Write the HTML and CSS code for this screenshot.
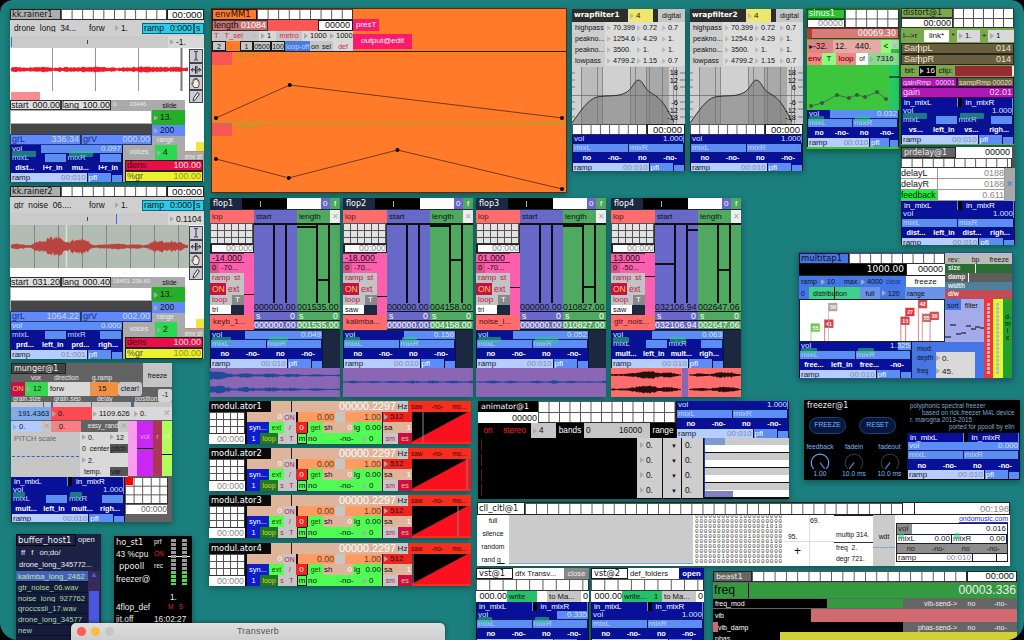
FILE: index.html
```html
<!DOCTYPE html>
<html lang="en">
<head>
<meta charset="utf-8">
<title>ppooll</title>
<link rel="stylesheet" href="styles.css">
</head>
<body>
<main class="desktop">

<section class="win rainer rainer-a" data-rainer="0"></section>
<section class="win rainer rainer-b" data-rainer="1"></section>

<section class="win munger">
  <div class="head">
    <div class="lead">
      <div class="row u1"><b class="v title">munger@1</b></div>
      <div class="row u2 cap"><i></i><b>vox</b><b>direction</b><b>g.ramp</b></div>
    </div>
    <b class="freeze">freeze</b>
  </div>
  <div class="row u3"><b class="crimson gold c">ON</b><b class="green num">12</b><b class="grey">forw</b><b class="orange num">15</b><b class="silver round c">clear!</b></div>
  <div class="row u4 cap"><b>grain.size</b><b>grain.sep</b><b>delay</b><b>position</b></div>
  <div class="row u5"><i class="silver m1"></i><i class="silver m2"></i><i class="silver m3"></i><i class="silver m2"></i></div>
  <div class="row u6"><b class="soft num">191.4363</b><b class="hot num">0.</b><b class="grey num">1109.626</b><b class="grey num">0.</b><b class="grey x">✕</b></div>
  <div class="mid">
    <div>
      <div class="row u7"><b class="pale num">0.</b><b class="silver x">✕</b><b class="rose num">0.</b><b class="snow r">easy_rand</b><b class="silver x">✕</b></div>
      <div class="row u8">
        <div class="pitch silver"><span>PITCH scale</span><i></i></div>
        <div class="quad grey"><span class="num">0.</span><span class="num">12</span><span>0 &nbsp;center</span><span class="dark">pitch</span><span class="num">2.</span><span></span><span class="temp">temp.</span><span class="dark">var</span></div>
      </div>
    </div>
    <div class="row sliders"><i class="s1"></i><b class="s2 c">vol</b><b class="s3 c">r</b><b class="s4 c">st</b></div>
  </div>
  <div class="foot"><div data-mix="7"></div><div class="side"><div class="cells seq"><i></i></div><b class="time white r">00:000</b></div></div>
  <b class="neg">-1</b>
</section>

<section class="win buffer">
  <div class="row b1"><b class="v title">buffer_host1</b><b>open</b></div>
  <div class="row b2"><b>ff &nbsp; f &nbsp; on;do/</b></div>
  <div class="row b2 long"><b>drone_long_345772...</b></div>
  <div class="files"><ul><li class="sel">kalimba_long_2462</li><li>gtr_noise_06.wav</li><li>noise_long_927762</li><li>qroccssii_17.wav</li><li>drone_long_34577</li><li>new</li></ul><div class="scroll"><span>▲</span><i></i></div></div>
</section>

<section class="win host">
  <div class="info">
    <div class="row"><b class="v">ho_st1</b><b class="s6">prf</b></div>
    <div class="row"><b>43 %cpu</b><b class="s6 redtext">ON</b></div>
    <div class="row"><b class="v in">ppooll</b><b class="s6">rec</b></div>
    <div class="row"><b>freezer@</b></div>
    <div class="row tall"><b></b><b>1.</b></div>
    <div class="row"><b>4flop_def</b><b class="s6 redtext">M &nbsp; S</b></div>
    <div class="row wide"><b>jit.off</b><b>16:02:27</b></div>
  </div>
  <div class="meters"><i></i><i></i></div>
</section>

<section class="macbar"><i class="close"></i><i class="mini"></i><i class="zoom"></i><span>Transverb</span></section>

<section class="win env">
  <div class="tools">
    <div>
      <div class="row e1"><b class="v bord">envMM1</b><i class="cells"></i></div>
      <div class="row e2"><b class="len sb"><span>length</span><span class="w9">01084</span></b><i class="coral"></i><b class="white bord r">00000</b></div>
      <div class="row e3"><b class="silver rt">T &nbsp; T_sel</b><b class="silver ring">○</b><b class="grey num">1</b><b class="silver rt c">metro</b><b class="grey num">1000</b><b class="grey num">1000</b></div>
      <div class="row e4"><b class="silver bord c">2</b><i></i><b class="silver bord c">1</b><b class="silver bord c">0500</b><b class="silver bord c">100</b><b class="loop c">loop-off</b><b class="silver c">on</b><b class="silver c">sel</b><b class="grey rt c">def</b></div>
    </div>
    <div class="magenta"><b>presT</b><b>output@edit</b></div>
  </div>
  <div class="curve"><i></i><span>□no□-no-</span><svg viewBox="0 0 355 70"><path d="M4 66 78 33 351 66"/><circle cx="4" cy="66" r="2"/><circle cx="78" cy="33" r="2"/><circle cx="351" cy="66" r="2"/></svg></div>
  <div class="curve second"><i></i><span>□no□-no-</span><svg viewBox="0 0 355 70"><path d="M4 36 77 55 186 27 351 66"/><circle cx="4" cy="36" r="2"/><circle cx="77" cy="55" r="2"/><circle cx="186" cy="27" r="2"/><circle cx="351" cy="66" r="2"/></svg></div>
</section>

<section class="win wrap wrap-a" data-wrap="1"></section>
<section class="win wrap wrap-b" data-wrap="2"></section>

<section class="win sinus">
  <div class="sinushead"><div><b class="v title">sinus1</b><b class="white r dim">00000</b></div><i class="cells"></i></div>
  <div class="row n1"><b class="v r">00069.30</b></div>
  <div class="row n2"><b class="dusty">▸-32.</b><b class="rosy">12.</b><b class="rosy">440.</b><b class="mint c">&lt;</b><b class="bar">✕</b></div>
  <div class="row n3"><b class="salmon c">env</b><b class="mint c">T</b><b class="salmon c">loop</b><b class="white c s6">of</b><b class="sage num">7316</b></div>
  <div class="graph"><svg viewBox="0 0 92 45"><path class="lane" d="M82 0h11v46H82z"/><path class="mark" d="M82 12h11"/><path class="line" d="M4 41 15 38 30 30 42 33 50 30 58 32 70 27 79 34"/><g><circle cx="4" cy="41" r="2"/><circle cx="15" cy="38" r="2"/><circle cx="30" cy="30" r="2"/><circle cx="42" cy="33" r="2"/><circle cx="50" cy="30" r="2"/><circle cx="58" cy="32" r="2"/><circle cx="70" cy="27" r="2"/><circle cx="79" cy="34" r="2"/></g></svg></div>
  <div data-mix="8"></div>
</section>

<section class="win distort">
  <div class="sinushead"><div><b class="v title">distort@1</b><b class="white r">00:000</b></div><i class="cells"></i></div>
  <div class="row d1"><b class="moss">l--&gt;r</b><b class="white c">link*</b><b class="moss c">*</b><b class="grey num">1.</b><b class="moss c">+</b><b class="grey num">1</b></div>
  <div class="row d2"><b class="olive sb tick"><span>SampL</span><span>014</span></b></div>
  <div class="row d2"><b class="olive sb tick"><span>SampR</span><span>014</span></b></div>
  <div class="row d3"><b class="moss c">bit:</b><b class="black num">16</b><b class="moss c">clip:</b><i class="brick"></i></div>
  <div class="row d4"><b class="violet sb"><span>gainRmp</span><span>00001</span></b><b class="olive sb"><span>sampRmp</span><span>00020</span></b></div>
  <div class="row d5"><b class="violet sb"><span>gain</span><span>02.01</span></b></div>
  <div data-mix="9"></div>
</section>

<section class="win prdelay">
  <div class="row p1"><b class="v title">prdelay@1</b><b class="white r">00000</b></div>
  <div class="cells strip"></div>
  <div class="delays"><div>
    <div class="row p2"><b>delayL</b><b class="r">0188</b></div>
    <div class="row p2"><b>delayR</b><b class="r">0188</b></div>
    <div class="row p2 fb"><b>feedback</b><b class="r">0.611</b></div>
  </div><b class="x">✕</b></div>
  <div data-mix="10"></div>
</section>

<section class="win flop flop-a" data-flop="0"></section>
<section class="win flop flop-b" data-flop="1"></section>
<section class="win flop flop-c" data-flop="2"></section>
<section class="win flop flop-d" data-flop="3"></section>

<section class="win multi">
  <div class="row mt">
    <div>
      <div class="row t1"><b class="v bord">multitap1</b><i class="cells"></i></div>
      <div class="row t2"><b class="black v r">1000.00</b><b class="white r">00000</b></div>
      <div class="row t3"><b>ramp</b><b class="num">10</b><b>max</b><b class="num">4000</b><b class="faint">clear</b><b class="white c">freeze</b></div>
      <div class="row t4"><b>0</b><b class="dist">distribution</b><b class="full c">full</b><b class="num">120</b><b class="full">range</b></div>
    </div>
    <div class="rev"><b class="silver">rev: <span>bp</span><span>freeze</span></b><b class="size">size</b><b class="damp">damp</b><b class="width">width</b><b class="dw">d/w</b></div>
  </div>
  <div class="row mb">
    <div>
      <div class="row t5"><div class="flags"><svg viewBox="0 0 145 42" id="flags"></svg></div><div class="sorter"><b>sort</b><span>filter</span><svg viewBox="0 0 39 32"><path d="M0 27h6M5 15h6M11 24h5M16 23h5M21 16h5M26 19h5M30 17h5M35 18h4"/></svg></div></div>
      <div class="row t6"><div data-mix="11"></div><div class="mod"><span>mod:</span><div class="row"><div class="names"><span>depth</span><span>freq</span></div><div class="grey vals"><span class="num">0.</span><span class="num">45.</span></div></div></div></div>
    </div>
    <i class="lamp redlamp"></i><i class="lamp yellowlamp"></i><b class="dmix">d-<br>m<br>i<br>x</b>
  </div>
</section>

<section class="win freezer">
  <div class="left">
    <b class="v">freezer@1</b>
    <div class="pills"><span>FREEZE</span><span>RESET</span></div>
    <div class="dials">
      <div><span>feedback</span><svg viewBox="0 0 20 18"><path class="on" d="M4 16A8.3 8.3 0 1 1 16 16"/><path class="hand" d="M10 10 14.500 16"/></svg><span>1.00</span></div>
      <div><span>fadein</span><svg viewBox="0 0 20 18"><path d="M4 16A8.300 8.300 0 1 1 16 16"/><path class="hand" d="M10 10 5.500 16"/></svg><span>10.0 ms</span></div>
      <div><span>fadeout</span><svg viewBox="0 0 20 18"><path d="M4 16A8.300 8.300 0 1 1 16 16"/><path class="hand" d="M10 10 5.500 16"/></svg><span>10.0 ms</span></div>
    </div>
  </div>
  <div class="right"><p>polyphonic spectral freezer</p><p class="i1">based on rick.freezer M4L device</p><p>r. marogna 2013-2015</p><p class="i2">ported for ppooll by elin</p><div data-mix="12"></div></div>
</section>

<section class="win modu modu-a" data-modu="1"></section>
<section class="win modu modu-b" data-modu="2"></section>
<section class="win modu modu-c" data-modu="3"></section>
<section class="win modu modu-d" data-modu="4"></section>

<section class="win anim">
  <div class="top">
    <div>
      <div class="row a1"><div><b class="v">animator@1</b><b class="white r">00000</b></div><i class="cells"></i></div>
      <div class="row a2"><b class="redtext c">on</b><b class="redtext c">stereo</b><b class="silver num">4</b><b class="c">bands</b><b class="silver">0</b><b class="silver">16000</b><b class="c">range</b></div>
    </div>
    <div data-mix="13"></div>
  </div>
  <div class="row a3"><div class="ticks"><i></i><i></i><i></i><i></i></div><div class="col"><b class="num">0.</b><b class="num">0.</b><b class="num">0.</b><b class="num">0.</b></div><div class="col mid"><b>▼</b><b>▼</b><b>▼</b><b>▼</b></div><div class="col"><b>0.</b><b>0.</b><b>0.</b><b>0.</b></div><div class="bars"><i></i><i></i><i></i><i></i></div></div>
</section>

<section class="win cll">
  <div class="row c1"><b class="v">cll_cltl@1</b><i class="cells"></i><b></b><b class="r dim">00:198</b></div>
  <div class="row c2">
    <div class="modes"><span>full</span><span>silence</span><span>random</span><span>rand <u>g_</u></span></div>
    <div class="field"></div>
    <pre>00000000001000000000
00000000000000000000
00000000000000001010
00000000000000000000
00000000000010000000
00000000000000000100
00000000000000000000
00000000000000000000
00000010000000000000
00000000000010000000</pre>
    <div class="cross"><span>69.</span><span>95.</span><span class="plus">+</span></div>
    <div class="nums"><span>multip 314.</span><span>freq &nbsp;2.</span><span>degr 721.</span></div>
    <b class="wdt c">wdt</b>
    <div class="out"><a>ondomusic.com</a><div data-mix="14" class="plain"></div></div>
  </div>
</section>

<section class="win vst vst-a">
  <div class="row v1"><b class="v white bord">vst@1</b><b class="white">dfx Transv...</b><b class="close c">close</b></div>
  <div class="cells strip"></div>
  <div class="row v2"><b class="white r">000.00</b><b class="write">write</b><b class="white"></b><b class="silver">to Ma...</b><b class="white r">0</b></div>
  <div data-mix="15"></div>
</section>
<section class="win vst vst-b">
  <div class="row v1"><b class="v white bord">vst@2</b><b class="white">def_folders</b><b class="navy c">open</b></div>
  <div class="cells strip"></div>
  <div class="row v2"><b class="white r">000.00</b><b class="write">write...</b><b class="write">1</b><b class="silver">to Ma...</b><b class="white r">0</b></div>
  <div data-mix="16"></div>
</section>

<section class="win beast">
  <div class="row g1"><b class="v">beast1</b><i class="cells"></i><b class="white r">00:000</b></div>
  <div class="row g2"><b>freq</b><b class="sb"><span></span><span>00003.336</span></b></div>
  <div class="row g3"><b class="black">freq_mod</b><i class="leaf"></i><b class="r">vib-send-&gt;</b><b class="c">no</b><b class="c">-no-</b></div>
  <div class="row g4"><b class="black">vib</b><i></i></div>
  <div class="row g5"><i></i><b class="black">vib_damp</b><b class="r">phas-send-&gt;</b><b class="c">no</b><b class="c">-no-</b></div>
  <div class="row g6"><b class="black">phas</b><i></i></div>
</section>

</main>
<script src="script.js"></script>
</body>
</html>
```

FILE: styles.css
```css
*{box-sizing:border-box}
body{margin:0;background:#000;font:7px/1 "Liberation Sans",Arial,sans-serif;color:#111}
b,i{font-weight:400;font-style:normal}
p{margin:0}
svg{display:block;width:100%;height:100%}
.desktop{position:relative;width:1024px;height:640px;overflow:hidden;border-radius:13px 13px 18px 18px;background:#1b7f7d}
.win{position:absolute;overflow:hidden;box-shadow:0 2px 6px rgba(0,0,0,.35)}
.row{display:grid}
.row>*{min-width:0}
.row>b,.row>i,.row>span{display:flex;align-items:center;overflow:hidden;white-space:nowrap;padding:0 2px}
.v{font-family:"DejaVu Sans",Verdana,sans-serif}
.row>.r,.r{justify-content:flex-end;text-align:right}
.row>.c,.c{justify-content:center;text-align:center;padding:0}
.row>.sb{justify-content:space-between}
.s6{font-size:6.500px}
.bord{border:1px solid #1a1a1a}
.num::before{content:"";flex:none;display:inline-block;border:3px solid transparent;border-left:4px solid #aaa;border-right:0;margin-right:2px}
.cells{background:linear-gradient(90deg,#555 1px,transparent 1px) 0 0/var(--cx,10.600px) 100%,linear-gradient(#555 1px,transparent 1px) 0 0/100% var(--cy,100%),#fff;border:1px solid #333;border-width:0 1px 1px 0}

.black{background:#000;color:#fff}.white{background:#fff}.grey{background:#d9d9d9}.silver{background:#c6c6c6}
.navy{background:#08109a;color:#fff}.pale{background:#b0ccff}.soft{background:#7cabec}
.green{background:#35d850}.orange{background:#f1903f}.crimson{background:#c80f4a}.hot{background:#fb4b50}.rose{background:#fb7e80}
.coral{background:#fb5656}.moss{background:#79a84d}.olive{background:#695e40;color:#e8e0d0}.violet{background:#ae18b4;color:#f5d8f7}.brick{background:#962b30}
.mint{background:#90fb7c}.salmon{background:#fd8383}.rosy{background:#e3aaa6}.dusty{background:#dc8583}.sage{background:#8ad990}
.row>.gold{color:#ffcf3f}.redtext{color:#f0201c}.rt{color:#e02540}.dim{color:#888}.faint{color:#1b3986}
.x{color:#aaa;font-size:9px}

/* output mixer */
.mix{background:#101830;color:#d7e3ff;font-size:8px;position:relative;border:1px solid #0c1234;border-top:0;border-bottom:0}
.mix .in{grid:9px/1fr 1fr;background:#08109a;color:#fff}
.mix .in b{border-right:1px solid #5b8df5}
.mix .in b:last-child{padding-left:4px;border-left:4px solid #000}
.mix .vol{height:9px;display:flex;justify-content:space-between;align-items:center;padding:0 1px;border-bottom:1px solid #0c1a60}
.mix .lr{grid:8px/1fr 1fr;border-bottom:1px solid #0c1a60}
.mix .lr b{border-right:1px solid #0c1a60;background:#5b8df5;padding:0 1px;color:#c3d3ff}
.mix .lr b.set{background:linear-gradient(90deg,#08109a 61%,#5b8df5 61%);color:#c9d5ff}
.mix .to{grid:10px/1fr 1fr 1fr 1fr;background:#08109a;color:#fff;font-size:7.300px;font-weight:700}
.mix .to b{font-weight:700;justify-content:center;padding:0}
.mix .ramp{grid:9px/69% 22% 9%;color:#222}
.mix .ramp>b{padding:0 1px;background:#5b8df5;border-right:1px solid #0c1234}
.mix .ramp>b:first-child{background:#b5cdff}
.mix .ramp>b span:last-child{color:#7f8aa0}
.mix .ramp>b:nth-child(2){color:#fff}
.mix .ramp>b:last-child{border-top:2px solid #08109a;border-right:0}
.mix .meter{position:absolute;height:6px;background:rgba(46,205,125,.55);border-radius:1px}
.mix .ml{left:1px}.mix .mr{left:52%}
.plain .mix{background:#fff;color:#222;border:1px solid #222}
.plain .mix .vol{height:11px;background:linear-gradient(90deg,#8d8d8d 14%,#fff 14%)}
.plain .mix .lr b{background:#fff;color:#222;justify-content:space-between}
.plain .mix .to{background:#8d8d8d;color:#222;grid-template-rows:9px}.plain .mix .to b{font-weight:400}
.plain .mix .ramp{grid-template-rows:8px}
.plain .mix .ramp>b,.plain .mix .ramp>b:first-child{background:#fff;color:#222;border-top:1px solid #222}

/* rainer */
.rainer{left:10px;width:194px;height:173px;background:#aaa}
.rainer-a{top:9px}.rainer-b{top:186px}
.rainer .q1{grid:11px/51px 106px 37px;font-size:9.800px}
.rainer .q1 .v{background:#aeaeae;font-size:8px;padding:0 1px;border:1px solid #222}
.rainer .q1 .white{border:1px solid #222;padding:0 1px}
.rainer .q2{grid:16px/77px 26px 29px 52px 10px;background:#cfcfcf;font-size:8.300px;align-items:center}
.rainer .q2 b:first-child{padding-left:4px;padding-right:0}
.rainer .q2 .cy{background:#27cdea;height:11px;border:1px solid #1a6070;font-size:8.800px;padding:0 1px}
.rainer .q3{grid:12px/1fr 36px;background:#cacaca;font-size:8.500px}
.rainer .q3 i{background:linear-gradient(#444,#444) 77px 4px/1px 4px no-repeat,linear-gradient(#3d6de0,#3d6de0) var(--m) 1px/1px 10px no-repeat}
.rainer .q3 b{background:#d8d8d8}
.rainer .wave{height:52px;background:#fff}
.rainer .low{display:grid;grid-template-columns:142px 33px 19px}
.rainer .q4{grid:10px/51px 50px 41px;font-size:9px}
.rainer .q4 b{padding:0;border:1px solid #333;background:#e0e0e0}
.rainer .q4 b:last-child{border:0;background:#aaa;color:#eee;font-size:5.800px;padding-left:2px}
.rainer .blank{height:12px;background:#fff;margin:1px 1px 0}
.rainer .shade{height:10px;background:#464646;margin:1px 0 0 1px}
.rainer .q5{grid:11px/1fr 1fr;font-size:9px;color:#203080}
.rainer .q5 b{background:#6289fa;border:1px solid #233880;padding:0 1px}
.rainer .q5 span:last-child{color:#ccd8ff}
.rainer .mid b{display:flex;align-items:center;padding-left:2px}
.rainer .mid b:first-child{height:10px;font-size:7px;justify-content:center}
.rainer .mid b:nth-child(2){height:15px;background:#27ae29;font-size:8.500px}
.rainer .mid b:nth-child(3){height:11px;background:#6289fa;font-size:8.500px}
.rainer .mid b:nth-child(4){height:9px;color:#eee;font-size:6.500px;padding-left:5px}
.rainer .edge{position:relative;background:linear-gradient(#f0e640,#f0e640) right bottom/8px 9px no-repeat,#fff;border-bottom:1px solid #e38558;height:52px;margin-bottom:-7px}
.rainer .end{display:grid;grid-template-columns:113px 1fr}
.rainer .q6{grid:15px/32px 22px 1fr;color:#eee;font-size:6.500px}
.rainer .q6 .green{background:#29d950;color:#111;font-size:8.500px}
.rainer .q6 b:last-child{align-items:flex-end;justify-content:flex-end}
.rainer .q7{grid:11px/1fr;font-size:9px;padding:0 1px 0 2px}
.rainer .q7 b{border:1px solid #222;background:#e80f49;color:#33000c;padding:0 1px}
.rainer .q7 span:last-child{color:#ffe1e8}
.rainer .q7.ye b{background:#edf129;color:#555}
.rainer .q7.ye span:last-child{color:#94961d}
.rainer .tools{position:absolute;right:1px;top:40px;width:14px;display:grid;grid-template-rows:repeat(4,13.500px);background:#ccccd8}
.rainer .tools svg{border:1px solid #444;fill:none;stroke:#222}

/* munger */
.munger{left:11px;top:363px;width:161px;height:159px;background:#626262;font-size:7.500px}
.munger .head{display:grid;grid-template-columns:1fr 29px;height:19px}
.munger .freeze{background:#c4c4c4;height:24px;display:grid;place-items:center;font-size:7px}
.munger .u1{grid:11px/55px}.munger .title{border:1px solid #222;color:#eee;background:#444;font-size:8px}
.munger .cap{color:#eee;font-size:6.500px;font-weight:700}
.munger .u2{grid:9px/18px 23px 38px 1fr}
.munger .u3{grid:14px/14px 23px 42px 28px 24px}
.munger .round{border-radius:3px}
.munger .u4{grid:6px/41px 43px 38px 37px}
.munger .u5{grid:5px/repeat(4,1fr);gap:1px}
.m1{box-shadow:inset -7px 0 #c6c6c6,inset -8px 0 #3366cc}.m2{border-left:1px solid #3366cc}.m3{border-right:1px solid #3366cc}
.munger .u6{grid:13px/40px 41px 41px 29px 10px;margin-bottom:1px}
.munger .u6 b{padding:0 1px}
.munger .mid{display:grid;grid-template-columns:117px 44px}
.munger .u7{grid:11px/30px 10px 30px 1fr 10px}
.munger .snow{color:#eee;font-size:6.500px;padding:0}
.munger .u8{grid:45px/69px 48px}
.pitch{color:#666;padding:3px}.pitch i{display:block;border-top:1px dashed #3a62b5;margin:13px -2px 0}
.quad{display:grid;grid:1fr 1fr 1fr 1fr/28px 18px;align-items:center;padding-left:2px;font-size:7px}
.quad span{white-space:nowrap}.quad .temp{padding-left:2px}
.quad .dark{background:#555;padding:1px}
.sliders{grid:55px/9px 16px 9px 10px}
.sliders .s1{background:#fa9dec}.sliders .s2{background:linear-gradient(#000,#000) 0 27px/100% 1px no-repeat,#c928f4;color:#e6a0ff;align-items:flex-start;padding-top:12px}
.sliders .s3{background:#aa3656;color:#e0a0b0;align-items:flex-start;padding-top:12px}.sliders .s4{background:linear-gradient(#000,#000) 0 33px/100% 1px no-repeat,#b1fb5c;color:#e0ffb0;align-items:flex-start;padding-top:12px}
.munger .foot{display:grid;grid-template-columns:114px 43px}
.munger .seq{height:27px;--cx:8.600px;--cy:8.700px}.seq i{display:block;width:8px;height:8px;background:#f00}
.munger .time{display:block;margin:1px 1px;font-size:8.500px;color:#666}
.munger .neg{position:absolute;right:0;top:26px;background:#d4d4d4;border-radius:2px;padding:3px 4px;font-size:6.500px}

/* buffer host */
.buffer{left:16px;top:534px;width:85px;height:108px;background:#1b2246;color:#eee;font-size:7.500px}
.buffer .b1{grid:12px/60px 25px}.buffer .title{border:1px solid #000;font-size:8.500px;padding:0 1px}
.buffer .b2{grid:12.500px/1fr;padding-left:3px}
.buffer .long b{padding:0}
.files{display:grid;grid-template-columns:72px 12px}
.files ul{list-style:none;margin:0;padding:0;color:#a7dca0;background:#151b3a;font-size:7.700px}
.files li{height:10.800px;padding:2px 2px 0;white-space:nowrap;overflow:hidden;border-bottom:1px solid #0c1028}
.files .sel{background:#4562b4;color:#bfeaa8}
.scroll{background:#382a58;text-align:center;color:#4558f0;font-size:8px}
.scroll i{display:block;background:#4758df;height:60px;margin:12px 1px 0}

/* host */
.host{left:114px;top:536px;width:78px;height:90px;background:#000;color:#eee;display:grid;grid-template-columns:54px 24px;font-size:8.300px}
.host .row{grid:12.200px/38px 16px}
.host .row b{padding-right:0}
.host .wide,.host .tall{grid-template-columns:38px 40px}
.host .tall{margin-top:6px}.host .tall b:last-child{padding-left:18px}
.host .in{padding-left:5px}
.host .info .row:nth-child(6){grid-template-columns:52px 26px;margin-top:-2px}
.meters{display:grid;grid-template-columns:5px 5px;gap:6px;padding:3px 0 0 3px;height:49px;background:linear-gradient(#fff,#fff) 0 20px/22px 1px no-repeat}
.meters i{background:repeating-linear-gradient(transparent 0 3px,#000 3px 4px),linear-gradient(#999 71%,#46e04b 71%)}

.macbar{position:absolute;left:71px;top:623px;width:374px;height:17px;background:linear-gradient(#dedede,#cfcfcf);border-radius:5px 5px 0 0;display:flex;align-items:center;gap:5px;padding-left:6px;color:#555;font-size:9px;box-shadow:0 0 4px #0008}
.macbar i{width:9px;height:9px;border-radius:50%;background:#fe5e57}.macbar .mini{background:#fdbb3f}.macbar .zoom{background:#c6c6c6}
.macbar span{margin-left:118px;letter-spacing:.2px}

/* envelope */
.env{left:211px;top:8px;width:356px;height:185px;background:#ff7b29;border:1px solid #5a2a0a;font-size:8px}
.env .tools{display:grid;grid-template-columns:141px 1fr;height:42px}
.env .e1{grid:11px/45px 96px;font-size:8.500px}
.env .e2{grid:11px/56px 50px 35px;font-size:9px}
.env .len{background:#cd6f6f;border:1px solid #333;padding:0 1px}.w9{color:#fff}
.env .e3{grid:10px/38px 9px 17px 26px 26px 25px;font-size:7.500px}
.env .e3 .ring{color:#aaa}
.env .e4{grid:10px/14px 14px 13px 18px 14px 25px 10px 13px 20px;font-size:7px}
.env .e4 b{padding:0}.env .loop{background:#4a7cdc;color:#bcd0ff}
.magenta{color:#fff;padding-top:10px}
.magenta b{display:table;background:#fb1a6c;padding:2px 3px;margin-bottom:3px;font-size:8px}
.magenta b:last-child{padding:3px 8px 4px}
.curve{height:71px;border-top:1px solid #222;position:relative}
.curve i{position:absolute;width:20px;height:13px;background:#f95656}
.curve span{position:absolute;left:24px;top:1px;font-size:5.500px;color:#7cb02a}
.curve path{fill:none;stroke:#3a1c06;stroke-width:.7}
.curve svg{position:absolute}
.second{border-top-color:#88ba2e}

/* wrapfilter */
.wrap{top:9px;width:113px;height:162px;background:#dcdcdc;font-size:7.200px}
.wrap-a{left:572px}.wrap-b{left:690px}
.wrap .w1{grid:13px/56px 25px 5px 27px;background:#2d2d2d}
.wrap .w1 .v{color:#fff;font-weight:700;font-size:7.300px;padding-bottom:2px}.wrap .w1 .yel{background:#efe76c;font-size:8px}
.wrap .w2{grid:11px/33px 30px 25px 25px}
.wrap .w2 b{padding:0 1px 0 2px}.wrap .w2 b:first-child{background:#cdcdcd;padding:0 0 0 3px}
.wrap .w2 .num::before,.wrap .w1 .num::before{border-left-color:#bbb}
.wrap .plot{height:58px;background:#d0d0d0}
.wrap .w3{grid:11px/75px 38px;font-size:9.500px;--cx:9.300px}.wrap .w3 b{border:1px solid #222}

/* sinus, distort, prdelay */
.sinus{left:806px;top:8px;width:94px;height:142px;background:#3dc63d;border:1px solid #15701a;font-size:8px}
.sinushead{display:grid;grid-template-columns:38px 1fr;--cx:10.600px;--cy:9.500px}
.sinushead b{display:flex;align-items:center;height:10px;padding:0 1px;font-size:9px;border:1px solid #333}
.sinus .sinushead b{height:9.500px}
.sinushead .title{background:#2fbe35;color:#f4fff0;font-size:8px;border-color:#0c5c10}
.sinus .n1{grid:11px/1fr;background:#d87b79;color:#fff;border:1px solid #6f2a2a;border-left:5px solid #b83b3b;font-size:8px}
.sinus .n1{grid-template-rows:9px}
.sinus .n2{grid:13px/26px 20px 28px 10px 1fr;margin-top:1px;font-size:8.300px}
.sinus .bar{color:#9bb;background:linear-gradient(#aedbb0 70%,#2fbe35 70%);padding:0}
.sinus .n3{grid:12px/15px 14px 20px 12px 1fr}
.sinus .graph{height:45px}
.lane{fill:#28c962}.mark{stroke:#000}.graph .line{fill:none;stroke:#444;stroke-width:.7}.graph circle{fill:#454}
.distort{left:901px;top:8px;width:113px;height:137px;background:#79a84d;font-size:8px}
.distort .sinushead{grid-template-columns:52px 1fr;--cx:10px;--cy:10px}
.distort .title{background:#79a84d;color:#14230a;border-color:#333}
.distort .d1{grid:12px/23px 25px 8px 23px 8px 1fr;margin:2px 0 1px}
.distort .d2{grid:11px/1fr;font-size:9px}
.distort .d2 b{border:1px solid #2a2417}
.distort .tick{background:linear-gradient(#ddd,#ddd) 16px 0/1px 100% no-repeat,#695e40}
.distort .d3{grid:12px/18px 17px 19px 1fr}.distort .brick{border-right:2px solid #eee}
.distort .d3 .brick,.distort .d3 .black{margin:1px 0}.distort .d3 .black{padding:0 1px}
.distort .d4{grid:10px/56px 57px;font-size:7px}.distort .d5{grid:11px/1fr;font-size:9px}
.distort .d5 b,.distort .d4 b{border:1px solid #400a44;padding:0 1px}
.prdelay{left:901px;top:147px;width:114px;height:98px;background:#505050;font-size:9px}
.prdelay .p1{grid:11px/55px 56px}.prdelay .title{background:#646464;color:#eee;border:1px solid #222;font-size:8px}
.prdelay .strip{height:10px;width:111px}
.delays{display:grid;grid-template-columns:104px 10px;background:#a8a8a8}
.delays .p2{grid:11px/37px 1fr;background:#fff}.delays .p2 b{border:1px solid #999;border-width:0 1px 1px 0;padding:0}
.delays .fb b:first-child{font-size:8.500px}
.delays .r{color:#888}.delays .fb b:first-child{background:#20ef36}.delays .x{place-self:center;color:#4f7fe0}

/* flop */
.flop{top:198px;width:130px;height:199px;background:#1c2840;font-size:8px}
.flop-a{left:210px}.flop-b{left:343px}.flop-c{left:476px}.flop-d{left:611px}
.flop .f1{grid:11px/32px 45px 34px 9px 10px;color:#fff}
.flop .f1 .v{font-size:8px;padding:0 3px}
.flop .f1 .black{background:linear-gradient(#aaa,#aaa) 18px 3px/1px 6px no-repeat,#000}
.flop .purple{background:#6868c8}.flop .leaf{background:#4fa961}.flop .sal{background:#fe6c6d}
.flop .f2{grid:13px/44px 43px 33px 10px;margin-top:1px}
.flop .f2 .x{background:#eee;font-size:8px}.flop .f2 .sal{color:#501818}
.flop .f3{grid-template-columns:44px 43px 43px}
.flop .ctl{display:grid;grid-template-columns:34px 10px}
.flop .seq{height:21px;--cx:7px;--cy:7px;background-color:#e3e3e3}
.flop .time{grid:7px/1fr;font-size:8.800px;border:1px solid #222;border-left-width:2px}
.flop .time b{padding:0}
.flop .pk{background:#fb5fae;height:62px}
.flop .k1{grid:10px/1fr;font-size:8.800px}.flop .k1 b{background:#fb5fae;border:1px solid #73204a;border-width:1px 0}
.flop .k2{grid:10px/9px 1fr;font-size:7.500px}.flop .k2 b{background:#e0508f}.flop .k2 b:last-child{background:#fb5fae}
.flop .k3{grid:10px/22px 12px;font-size:8px}.flop .k3 b{background:#c3c3c3;color:#bb1848;padding:0 2px}
.flop .k4{grid:12px/16px 18px;font-size:8.500px}.flop .k4 b{background:#c3c3c3;color:#bb1848;padding:0 2px}.flop .k4 .gold{background:#c80f4a;color:#ffcf3f}
.flop .k3 .t{background:#888;color:#fff;padding-left:3px}
.flop .k5{grid:9px/21px 13px;font-size:7.500px}
.flop .name{height:15px;padding:3px 3px;color:#4f1414}
.flop .faders{height:80px;display:grid;grid-template-columns:21px 12px 10px;border-top:2px solid #111}
.flop .faders i{border-right:2px solid #0b0b18}
.flop .faders i:last-child{border:0}
.flop .val{grid:8px/1fr;font-size:8.800px;border-bottom:1px solid #111}.flop .val b{padding:0}
.flop .val.lo{color:#fff}.flop .val .sb{padding:0 2px;color:#fff}
.flop .f4{grid-template-columns:113px 17px;margin-top:1px}
.flop .wv{height:30px;background:#8a66b4}.flop-d .wv{background:linear-gradient(#8a66b4,#8a66b4) 71px 0/6px 100% no-repeat,#fe6c6d}

/* multitap */
.multi{left:798px;top:252px;width:215px;height:127px;background:#4576e6;border:1px solid #2d4f9b;font-size:7px}
.multi .mt{grid-template-columns:146px 67px}.multi .mb{grid:80px/185px 9px 10px 9px}
.multi .t1{grid:11px/50px 96px;font-size:8.500px}.multi .t1 .v{padding:0 1px}
.multi .t2{grid:11px/107px 39px;font-size:9px;border-bottom:1px solid #222}.multi .t2 .white{border-left:1px solid #222}
.multi .t3{grid:11px/20px 23px 17px 25px 22px 39px}.multi .t3 .c{font-size:8px}
.multi .t4{grid:12px/10px 51px 20px 25px 40px}.multi .t4 .dist{background:linear-gradient(#111,#111) 25px 0/1px 100% no-repeat,#3fd08c;padding-left:4px}.multi .full{background:#6b93ea}
.rev b{display:block;height:8.750px;padding:1px 3px 0;color:#eee;font-weight:700;font-size:6.500px;white-space:nowrap}
.rev .silver{height:11px;padding-top:3px;color:#222;background:#bbb;font-weight:400;font-size:7px}.rev .silver span{margin-left:10px}
.rev .size{background:linear-gradient(#fff,#fff) 30px 0/1px 100% no-repeat,#2a6c31}.rev .damp{background:linear-gradient(#fff,#fff) 23px 0/1px 100% no-repeat,#5e5e5e}.rev .width{background:#4f809a}.rev .dw{background:#c34c54}
.multi .t5{grid:43px/146px 39px}.flags{background:#fff;border:1px solid #222}.flags text{font:bold 5.500px "Liberation Sans",sans-serif;fill:#fff}
.sorter{background:#a5abea}.sorter b{background:#4576e6;padding:3px 2px 1px;display:inline-block;margin-right:4px}.sorter svg{height:32px}.sorter path{stroke:#000;stroke-width:1}
.multi .t6{grid-template-columns:113px 72px}
.mod{padding:3px 0 0 5px}.mod .row{grid-template-columns:19px 39px}
.mod .names span,.mod .vals span{display:block;height:13px;padding-top:3px;white-space:nowrap}.mod .vals{font-size:8px}.mod .names{font-size:6.500px}
.lamp{background:repeating-linear-gradient(#bbb 0 3px,transparent 3px 4px) 3px 4px/3px 72px no-repeat}
.redlamp{background-color:#fb3038}.yellowlamp{background-color:#dffa2f}
.multi .dmix{background:#23a02b;display:block;padding-top:14px;line-height:1;text-align:center}

/* freezer */
.freezer{left:804px;top:400px;width:216px;height:80px;background:#000;color:#79b8f2;display:grid;grid-template-columns:103px 113px;font-size:6.700px}
.freezer .left>.v{color:#eee;font-size:8px;padding:2px 3px;display:block}
.pills{display:flex;gap:13px;padding:5px 5px 0}.pills span{width:37px;height:17px;border:1px solid #24406c;border-radius:9px;background:#06183f;display:grid;place-items:center}
.dials{display:grid;grid-template-columns:32px 36px 35px;text-align:center;margin-top:10px;white-space:nowrap}
.dials svg{height:19px;width:22px;margin:1px auto 0}.dials path{fill:none;stroke:#333;stroke-width:1.200}.dials path.on{stroke:#5ca6ee}.dials path.hand{stroke:#4c88c8}
.freezer .right p{padding-left:3px;height:7.100px;padding-top:1px;white-space:nowrap;color:#7eaac8;font-size:6.300px}
.freezer .right{padding-top:2px}.freezer .right .i1{padding-left:15px}.freezer .right .i2{padding-left:42px;margin-bottom:3px}

/* modulator */
.modu{left:209px;width:262px;height:43px;background:#0a0a0a;font-size:8px}
.modu-a{top:401px}.modu-b{top:448px}.modu-c{top:495px}.modu-d{top:543px}
.modu .o1{grid:11px/62px 126px 11px 63px}
.modu .o1 .v{color:#fff;font-size:8.300px}
.modu .tan{background:#deb49a}.modu .o1 .tan{background:linear-gradient(#222,#222) 20px 0/1px 100% no-repeat,#deb49a;color:#fff;font-size:10.800px;padding:0 1px}
.modu .redtop{background:#f62e1d;font-size:6.500px;color:#3b0a05;padding:2px 0 0 3px}
.modu .redtop span{margin-right:9px}
.modu .o2{grid-template-columns:36px 167px 59px}
.modu .seq{height:22px;--cx:7px;--cy:7px}
.modu .time{grid:10px/1fr;font-size:8.800px}.modu .time b{padding:0 1px}
.modu .o3{grid:10px/2px 36px 13px 2px 37px 10px 37px 1px 29px}
.modu .o4{grid:11px/2px 22px 15px 12px 11px 1px 15px 30px 29px 1px 15px 14px}
.modu .o5{grid:11px/2px 13px 18px 8px 11px 10px 24px 31px 20px 1px 15px 14px}
.modu .o3 b,.modu .o4 b,.modu .o5 b{padding:0 1px}
.modu .o4 i{background:#0a0a0a}
.modu .big{font-size:8.800px;color:#5a4433}.modu .wt{color:#fff}
.modu .or{background:#fd9b60}.modu .blue{background:#0e1ccc;color:#fff;font-size:7.500px}.modu .lime{background:#50fb54}.modu .rd{background:#f0241d}
.modu .dg{background:#1d7a1d;color:#e2c94a;font-size:7px}.modu .pk{color:#c01050;font-size:7px}.modu .lm7{font-size:7px;color:#1a4c00}
.modu .gold{font-size:7px}
.modu .saw{height:32px}

/* animator */
.anim{left:478px;top:401px;width:311px;height:98px;background:#000;color:#fff;font-size:8.300px}
.anim .top{display:grid;grid-template-columns:198px 113px;height:37px}
.anim .white,.anim .silver{color:#111}
.anim .a1{grid:22px/60px 138px;--cx:10.500px;--cy:11px}.anim .a1 div b{display:block;height:11px;padding:2px 1px 0;font-size:9px}.anim .a1 div .v{font-size:7.800px;padding-left:3px}
.anim .a2{grid:15px/20px 33px 25px 28px 33px 33px 26px}
.anim .a3{grid:60px/159px 26px 19px 22px 85px}
.anim .col{background:#cecece;color:#111;border-right:1px solid #111;display:grid;grid-template-rows:repeat(4,15px);align-items:center}
.anim .col b{padding-left:3px}.anim .col.mid b{font-size:6px;text-align:center;padding:0 0 0 4px}
.ticks{display:grid;grid-template-rows:repeat(4,12px);gap:3px;padding:1px 3px}.ticks i{border-left:1px solid #5f1d1d}
.bars{display:grid;grid-template-rows:repeat(4,15px)}.bars i{background:linear-gradient(#cbcbcb 50%,#fff 50%);border-left:1px solid #2038b0;border-bottom:1px solid #111}
.bars i:first-child{background:linear-gradient(#7e9ccf,#7e9ccf) 0 0/20px 7px no-repeat,linear-gradient(#cbcbcb 50%,#fff 50%)}.bars i:last-child{background:linear-gradient(#8080c4,#8080c4) 0 8px/28px 7px no-repeat,linear-gradient(#cbcbcb 50%,#fff 50%)}

/* cell automaton */
.cll{left:477px;top:502px;width:533px;height:64px;background:#fff;font-size:6.800px}
.cll .c1{grid:11px/47px 378px 11px 97px;border:1px solid #222;--cx:11.100px}
.cll .c1 .v{font-size:8.300px;padding:0 1px}.cll .c1 .r{font-size:9.500px;border-left:1px solid #222}.cll .c1 .v,.cll .cells{border-right:1px solid #222;border-bottom:0}
.cll .c2{grid:51px/32px 184px 91px 50px 39px 22px 115px}
.modes{display:grid;grid-template-rows:repeat(4,13px);align-items:center;text-align:center}
.field{background:#cbcbcb;border-bottom:1px solid #8aa2d4;height:49px}
.cll pre{margin:0;padding:0 0 0 2px;font:6px/4.950px "Liberation Mono",monospace;letter-spacing:.8px;color:#444}
.cross{display:grid;grid:16px 13px 15px/26px 24px;background:linear-gradient(#ddd,#ddd) 0 26px/100% 1px no-repeat,linear-gradient(#ddd,#ddd) 25px 0/1px 100% no-repeat}
.cross span{padding:3px 0 0 4px}.cross span:first-child{grid-area:1/2;padding-left:0}.cross span:nth-child(2){grid-area:2/1}.cross .plus{grid-area:3/1;font-size:12px;padding:1px 0 0 10px}
.nums{display:grid;grid:27px 12px 11px/1fr;align-items:end;border-top:1px solid #222;white-space:nowrap}.nums span{padding:0 0 3px 2px}.nums span:first-child{border-bottom:1px solid #333}
.cll .c2 .wdt{background:linear-gradient(#8aa2d4,#8aa2d4) 0 32px/100% 1px no-repeat,#cbcbcb;height:51px;padding-bottom:6px}
.out{padding:0 2px 0 1px}.out a{display:block;text-align:right;color:#2430d8;text-decoration:underline;height:8px;font-size:7px}

/* vst and beast */
.vst{top:568px;width:113px;height:80px;background:#08109a;font-size:7.700px}
.vst-a{left:476px}.vst-b{left:591px}
.vst .v1{grid:11px/37px 51px 25px}.vst .v1 .v{font-size:8.300px}.vst .close{background:#888;color:#eee}.vst .navy{font-weight:700}
.vst .strip{height:12px;--cx:13.300px}
.vst .v2{grid:11px/31px 30px 10px 34px 8px}.vst .v2 b:first-child{font-size:9px;padding:0}.vst .write{background:#27bf69}.vst .v2 .r{font-size:9px;padding:0 1px}
.beast{left:713px;top:571px;width:304px;height:75px;background:#666;color:#eee;font-size:7px}
.beast .g1{grid:11px/39px 215px 50px;--cx:11.300px;font-size:9.300px}.beast .g1 .v{border:1px solid #222;font-size:7.800px}.beast .g1 .white{color:#111;border:1px solid #222}
.beast .g2{grid:15px/36px 1fr;background:#339a40;margin-top:1px;font-size:12.200px;color:#eee}.beast .g2 b:first-child{border-right:1px solid #000;color:#0a0a0a;padding:0 1px}
.beast .g2 .sb{padding:0 1px}
.beast .g3{grid:9px/114px 76px 56px 25px 33px;margin-top:1px}.beast .g3 .leaf{background:#339a40}
.beast .g4{grid:13px/98px 1fr;margin-top:1px}.beast .g4 i{background:#d16a70}
.beast .g5{grid:10px/5px 185px 56px 25px 33px}.beast .g5 i{background:#d16a70}.beast .g5 b:nth-child(2){padding:0}
.beast .g6{grid:13px/67px 1fr}.beast .g6 i{background:#d1d136}
```

FILE: script.js
```js
// Output mixers: vol label, fill %, destinations, routed flag, ramp, input row, meter widths
const NO = ['no', '-no-', 'no', '-no-'];
const mixers = [
  { vol: '0.097', fill: 27, to: ['dist...', 'l+r_in', 'mu...', 'l+r_in'], set: 1, m: 24 },
  { vol: '0.000', fill: 0, to: ['prd...', 'left_in', 'prd...', 'righ...'], set: 1, ramp: '01:001' },
  { vol: '0.049', fill: 31, m: 19 }, { vol: '0.156', fill: 54, m: 15 },
  { vol: '0.052', fill: 32, m: 23 },
  { vol: '0.063', fill: 36, to: ['mult...', 'left_in', 'mult...', 'righ...'], set: 1, m: 16 },
  { vol: '1.000', fill: 99 },
  { vol: '1.000', fill: 99, to: ['mult...', 'left_in', 'mult...', 'righ...'], set: 1, inp: 1, m: 12 },
  { vol: '0.032', fill: 24, m: 15 },
  { vol: '1.000', fill: 99, to: ['vs...', 'left_in', 'vs...', 'righ...'], set: 1, inp: 1, m: 24 },
  { vol: '1.000', fill: 99, to: ['dist...', 'left_in', 'dist...', 'righ...'], inp: 1 },
  { vol: '1.325', fill: 88, to: ['free...', 'left_in', 'free...', '-no-'], m: 16 },
  { vol: '0.000', fill: 0, inp: 1 },
  { vol: '1.000', fill: 99 },
  { vol: '0.016', plain: 1, m: 6 },
  { vol: '0.335', fill: 72, inp: 1, m: 14 }, { vol: '1.000', fill: 99, inp: 1 }
];
function mixer(n) {
  const o = mixers[n], set = o.set ? ' class="set"' : '';
  const lv = o.plain ? '<span>0.00</span>' : '';
  const vf = o.plain ? '' : ` style="background:linear-gradient(90deg,#08109a ${o.fill}%,#5b8df5 ${o.fill}%)"`;
  const mt = (o.inp ? 15 : 6) + (o.plain ? 3 : 0);
  return `<div class="mix">${o.inp ? '<div class="row in"><b>in_mixL</b><b>in_mixR</b></div>' : ''}
<div class="vol"${vf}><span>vol</span><span>${o.vol}</span></div>
<div class="row lr"><b${set}>mixL${lv}</b><b${set}>mixR${lv}</b></div>
<div class="row to">${(o.to || NO).map(t => `<b>${t}</b>`).join('')}</div>
<div class="row ramp"><b class="sb"><span>ramp</span><span>${o.ramp || '00:010'}</span></b><b>${o.plain ? '' : 'pfl'}</b><b></b></div>
${o.m ? ['ml', 'mr'].map(c => `<i class="meter ${c}" style="width:${o.m}px;top:${mt}px"></i>`).join('') : ''}</div>`;
}

// Deterministic waveform outline from an amplitude envelope
let seed = 7;
const rnd = () => (seed = (seed * 16807) % 2147483647) / 2147483647;
function wave(x0, x1, cy, env, color) {
  let up = '', dn = '';
  for (let x = x0; x <= x1; x++) {
    const p = (x - x0) / (x1 - x0) * (env.length - 1), i = Math.min(env.length - 2, Math.floor(p));
    const a = (env[i] + (env[i + 1] - env[i]) * (p - i)) * (0.55 + rnd() * 0.5);
    up += `L${x} ${(cy - a).toFixed(1)}`;
    dn = `L${x} ${(cy + a * (0.8 + rnd() * 0.3)).toFixed(1)}` + dn;
  }
  return `<path fill="${color}" d="M${up.slice(1)}${dn}Z"/>`;
}
const lines = (xs, h, w, y = 0) => xs.map(x => `<path d="M${x} ${y}v${h}" stroke="#777" stroke-width="${w}"/>`).join('');

const rainers = [
  { file: 'drone_long_34...', pos: '-1.', start: '000.00', lang: '100.00', info: '0. &emsp;&ensp; 33446.', l: '336.34', v: '000.00', voices: 4, mark: 1 },
  { file: 'gtr_noise_06....', pos: '0.1104', start: '031.20', lang: '000.40', info: '18453. 236.60', l: '1064.22', v: '002.00', voices: 2, mark: 106 }
];
const rainerWaves = [
  lines([42.5, 85.5, 128.5], 43, .8) + lines([171.5], 43, 2) + wave(1, 178, 21.5, [3, 2, 3, 2, 3, 2.6, 3, 2, 2.6, 3.2, 2.5, 3, 2], '#f01d26') + '<path fill="#fb8b90" d="M1 44h29v8H1z"/>',
  '<path fill="#b3bcb3" d="M0 0h179v43H0z"/>' + lines([24.5, 48.5, 72.5, 96.5, 120.5, 144.5, 168.5], 43, .8) + '<path d="M56.500 0v43" stroke="#ddd" stroke-width="1.500"/>' + wave(1, 178, 21.5, [2, 3, 2, 2, 6, 8, 10, 11, 4, 7, 8, 8, 2, 2, 2, 3, 3, 2, 3, 2, 2, 6, 6, 5, 6, 4, 2], '#b8433f')
];
document.querySelectorAll('[data-rainer]').forEach(el => {
  const k = +el.dataset.rainer, o = rainers[k];
  el.innerHTML = `<div class="row q1"><b class="v">kk.rainer${k + 1}</b><i class="cells"></i><b class="white r">00:000</b></div>
<div class="row q2"><b>${o.file}</b><b>forw</b><b class="num">1.</b><b class="cy sb"><span>ramp</span><span>0:000</span></b><b class="cy">s</b></div>
<div class="row q3"><i style="--m:${o.mark}px"></i><b class="num">${o.pos}</b></div>
<div class="wave"><svg viewBox="0 0 194 52">${rainerWaves[k]}</svg></div>
<div class="low"><div><div class="row q4"><b class="sb"><span>start</span><span>${o.start}</span></b><b class="sb"><span>lang</span><span>${o.lang}</span></b><b>${o.info}</b></div>
<div class="blank"></div><div class="shade"></div>
<div class="row q5"><b class="sb"><span>grL</span><span>${o.l}</span></b><b class="sb"><span>grV</span><span>${o.v}</span></b></div></div>
<div class="mid"><b>slide</b><b class="num">13.</b><b class="num">200</b><b>range</b></div><div class="edge"></div></div>
<div class="end"><div>${mixer(k)}</div><div><div class="row q6"><b class="c">voices</b><b class="green num">${o.voices}</b><b>env st</b></div>
<div class="row q7"><b class="sb"><span>dens</span><span>100.00</span></b></div><div class="row q7 ye"><b class="sb"><span>%gr</span><span>100.00</span></b></div></div></div>
<div class="tools"><svg viewBox="0 0 12 12"><path d="M4 1.500h1.500L6 2v8l-.5.5H4M8 1.500H6.500L6 2M6 10l.5.5H8"/></svg><svg viewBox="0 0 12 12"><path d="M5.500 2v8M7 2v8M1 6h4M7.500 6H11M3 4 1 6l2 2M9 4l2 2-2 2"/></svg><svg viewBox="0 0 12 12"><path fill="#fbe7e2" stroke-width=".8" d="M4 11 2 7.500C1 6 2 5.500 3 7V3.500c0-1 1-1 1.200 0V2.500c0-1 1.200-1 1.200 0V2c0-1 1.300-1 1.300 0v1c0-1 1.200-1 1.200 0v1.500c.3-1 1.300-.8 1.300.2V8L8 11z"/></svg><svg viewBox="0 0 12 12"><path fill="#fff" d="M3 10.500 3.500 7.500 7.500 1.500 9.500 3 5.500 9z"/></svg></div>`;
});

const bands = [['highpass', '70.399', '0.72', '0.7'], ['peakno...', '1254.6', '4.29', '1.'], ['peakno...', '3500.', '1.', '1.'], ['lowpass', '4799.2', '1.15', '0.7']];
const curve = 'M0 57C8 46 16 33 25 31C36 29 45 31 53 27C60 24 62 15 66 14C71 14 72 23 79 27C88 32 92 36 102 56';
document.querySelectorAll('[data-wrap]').forEach(el => {
  el.innerHTML = `<div class="row w1"><b class="v">wrapfilter${el.dataset.wrap}</b><b class="yel num">4</b><i></i><b class="silver c">digital</b></div>
${bands.map(b => `<div class="row w2"><b>${b[0]}</b><b class="num">${b[1]}</b><b class="num">${b[2]}</b><b class="num">${b[3]}</b></div>`).join('')}
<div class="plot"><svg viewBox="0 0 113 58"><path fill="#bbb" d="M9 1h21v57H9zM58 1h17v57H58z"/><path fill="#a8a8a8" d="M75 1h22v57H75z"/><path fill="#777" fill-opacity=".55" d="${curve}V58H0z"/>${lines([9.5, 25.5, 30.5, 58.5, 63.5, 74.5, 77.5, 90.5], 57, .8, 1)}${lines([101.5, 104.5], 57, .7, 1)}<path stroke="#666" stroke-width=".7" d="M0 29.500h113"/><path fill="none" stroke="#222" stroke-width=".9" d="${curve}"/><path stroke="#555" stroke-width=".7" d="M0 7h3M0 14h3M0 21h3M0 36h3M0 43h3M0 51h3M108 7h5M108 14h5M108 21h5M108 36h5M108 43h5M108 51h5"/><g font-size="7.500" text-anchor="end"><text x="106" y="9">18</text><text x="106" y="17">12</text><text x="106" y="24">6</text><text x="106" y="39">-6</text><text x="106" y="47">-12</text><text x="106" y="54">-18</text></g></svg></div>
<div class="row w3"><i class="cells"></i><b class="white r">00:000</b></div>${mixer(6)}`;
});

const flops = [
  { v: '-14.000', b: '-70...', wv: 'tri', name: 'keyb_1...', s: '000000.00', l: '001535.00', p: 41, sl: [], gl: [[0, 1], [1, 54]] },
  { v: '-18.000', b: '-70...', wv: 'saw', name: 'kalimba...', s: '000000.00', l: '004158.00', p: 43, sl: [], gl: [[0, 0], [1, 34]] },
  { v: '01.000', b: '-70...', wv: 'tri', name: 'noise_l...', s: '000000.00', l: '010827.00', p: 34, sl: [], gl: [[0, 0], [1, 61]] },
  { v: '13.000', b: '-50...', wv: 'saw', name: 'gtr_nois...', s: '032106.94', l: '002647.06', p: 23, sl: [[0, 38], [2, 4]], gl: [[1, 44]] }
];
const flopWaves = [
  '<path stroke="#1d4a99" stroke-width=".6" d="M0 7.500h130M0 21.500h130"/>' + wave(0, 130, 7.5, [5, 4, 1, 3, 1, 2.5, 1, 2, .6, 1.5, .5, 1], '#1d4a99') + wave(0, 130, 21.5, [4, 4, 1, 3, 1, 2.5, 1, 2, .6, 1.5, .5, 1], '#1d4a99'),
  '<path stroke="#1d4a99" stroke-width=".6" d="M0 14h130"/>' + wave(0, 130, 14, [.4, 1.4, .3, 1.4, .2, 1.5, .3, 1.6, .3, 2, .2, 2, .2, 1.6], '#1d4a99'),
  '<path stroke="#1d4a99" stroke-width=".6" d="M0 14h130"/>' + wave(0, 130, 14, [.3, .6, 1.8, .2, 1.6, .4, .3, 1.7, .2, 2, .2, 1.5, .3, .7, .2, 1.6], '#1d4a99'),
  [7, 21.5].map(y => wave(0, 70, y, [1, 1, 2, 4, 4, 2, 3, .5], '#25100e') + wave(78, 130, y, [.5, 2, 1, 3, 3, .6], '#25100e')).join('')
];
const fader = a => [0, 1, 2].map(i => { const h = a.find(z => z[0] === i); return `<i${h ? ` style="background:linear-gradient(#111,#111) 0 ${h[1]}px/100% 2px no-repeat"` : ''}></i>`; }).join('');
document.querySelectorAll('[data-flop]').forEach(el => {
  const k = +el.dataset.flop, o = flops[k];
  el.innerHTML = `<div class="row f1"><b class="v">flop${k + 1}</b><i class="black"></i><i class="white"></i><b class="purple">0</b><b class="leaf c">f</b></div>
<div class="row f2"><b class="sal">lop</b><b class="purple">start</b><b class="leaf">length</b><b class="x c">✕</b></div>
<div class="row f3"><div><div class="cells seq"></div><div class="row time"><b class="white r dim">00:000</b></div>
<div class="ctl"><div><div class="row k1"><b>${o.v}</b></div><div class="row k2"><b>0</b><b>${o.b}</b></div><div class="row k3"><b>ramp</b><b>st</b></div><div class="row k4"><b class="gold">ON</b><b>ext</b></div><div class="row k3"><b>loop</b><b class="t">T</b></div><div class="row k5"><b class="white">${o.wv}</b><i></i></div></div><div class="pk" style="background:linear-gradient(#111,#111) 0 ${o.p}px/100% 1px no-repeat,#fb5fae"></div></div><div class="name sal">${o.name}</div></div>
${[['purple', o.sl, o.s], ['leaf', o.gl, o.l]].map(c => `<div class="${c[0]}"><div class="faders">${fader(c[1])}</div><div class="row val"><b>${c[2]}</b></div><div class="row val"><b class="sb"><span>s</span><span>0</span></b></div><div class="row val lo"><b>${c[2]}</b></div></div>`).join('')}</div>
<div class="row f4"><div>${mixer(2 + k)}</div></div><div class="wv"><svg viewBox="0 0 130 30">${flopWaves[k]}</svg></div>`;
});

const playheads = [11, 55, 46, 1];
document.querySelectorAll('[data-modu]').forEach(el => {
  const k = +el.dataset.modu;
  el.innerHTML = `<div class="row o1"><b class="v">modul.ator${k}</b><b class="tan r">00000.2297</b><b class="silver c">Hz</b><b class="redtop"><span>saw</span><span>-no-</span>mo...</b></div>
<div class="row o2"><div><div class="cells seq"></div><div class="row time"><b class="white r dim">00:000</b></div></div><div>
<div class="row o3"><i></i><b class="tan wt r">0</b><b class="silver pk c">ON</b><i></i><b class="or big r">0.00</b><i class="silver"></i><b class="or big r">1.00</b><i></i><b class="rd num">512</b></div>
<div class="row o4"><i></i><b class="blue c">syn...</b><b class="lime lm7 c">ext</b><b class="silver pk c">/</b><b class="rd wt c">0</b><i></i><b class="lime lm7 c">get</b><b class="tan sb"><span>sh</span><span class="wt">0</span></b><b class="lime sb"><span>lg</span><span>0.00</span></b><i></i><b class="tan">sa</b><b class="tan wt r">1</b></div>
<div class="row o5"><i></i><b class="blue c">1</b><b class="dg c">loop</b><b class="silver pk c">s</b><b class="silver pk c">T</b><b class="lime bord c">m</b><b class="lime">no</b><b class="lime c">-no-</b><b class="lime num">0</b><i></i><b class="silver pk c">sm</b><b class="crimson gold c">es</b></div></div>
<div class="saw"><svg viewBox="0 0 59 32"><path fill="#f62e1d" d="M0 0h59v32H0z"/><path d="M0 0h56L0 30z"/><path fill="#fb1020" d="M0 30 56 0h3v30z"/><path stroke="#888" d="M${playheads[k - 1]} 0v30"/></svg></div></div>`;
});

// Tap markers: x, y, label, colour
document.getElementById('flags').innerHTML = [[10, 24, '55', '#70c850'], [24, 20, '41', '#d83b40'], [28, 3, '50', '#b3a4a0'], [102, 17, '15', '#d04b4f'], [107, 8, '27', '#ed2f33'], [120, 0, '42', '#d04b4f'], [124, 14, '55', '#c07068'], [132, 12, '30', '#d84b4f']]
  .map(f => `<path stroke="${f[3]}" stroke-width=".7" d="M${f[0]} ${f[1]}V42"/><rect x="${f[0]}" y="${f[1]}" width="9" height="8.500" fill="${f[3]}"/><text x="${f[0] + 1.5}" y="${f[1] + 6.3}">${f[2]}</text>`).join('');

document.querySelectorAll('[data-mix]').forEach(el => { el.innerHTML = mixer(+el.dataset.mix); });
```
